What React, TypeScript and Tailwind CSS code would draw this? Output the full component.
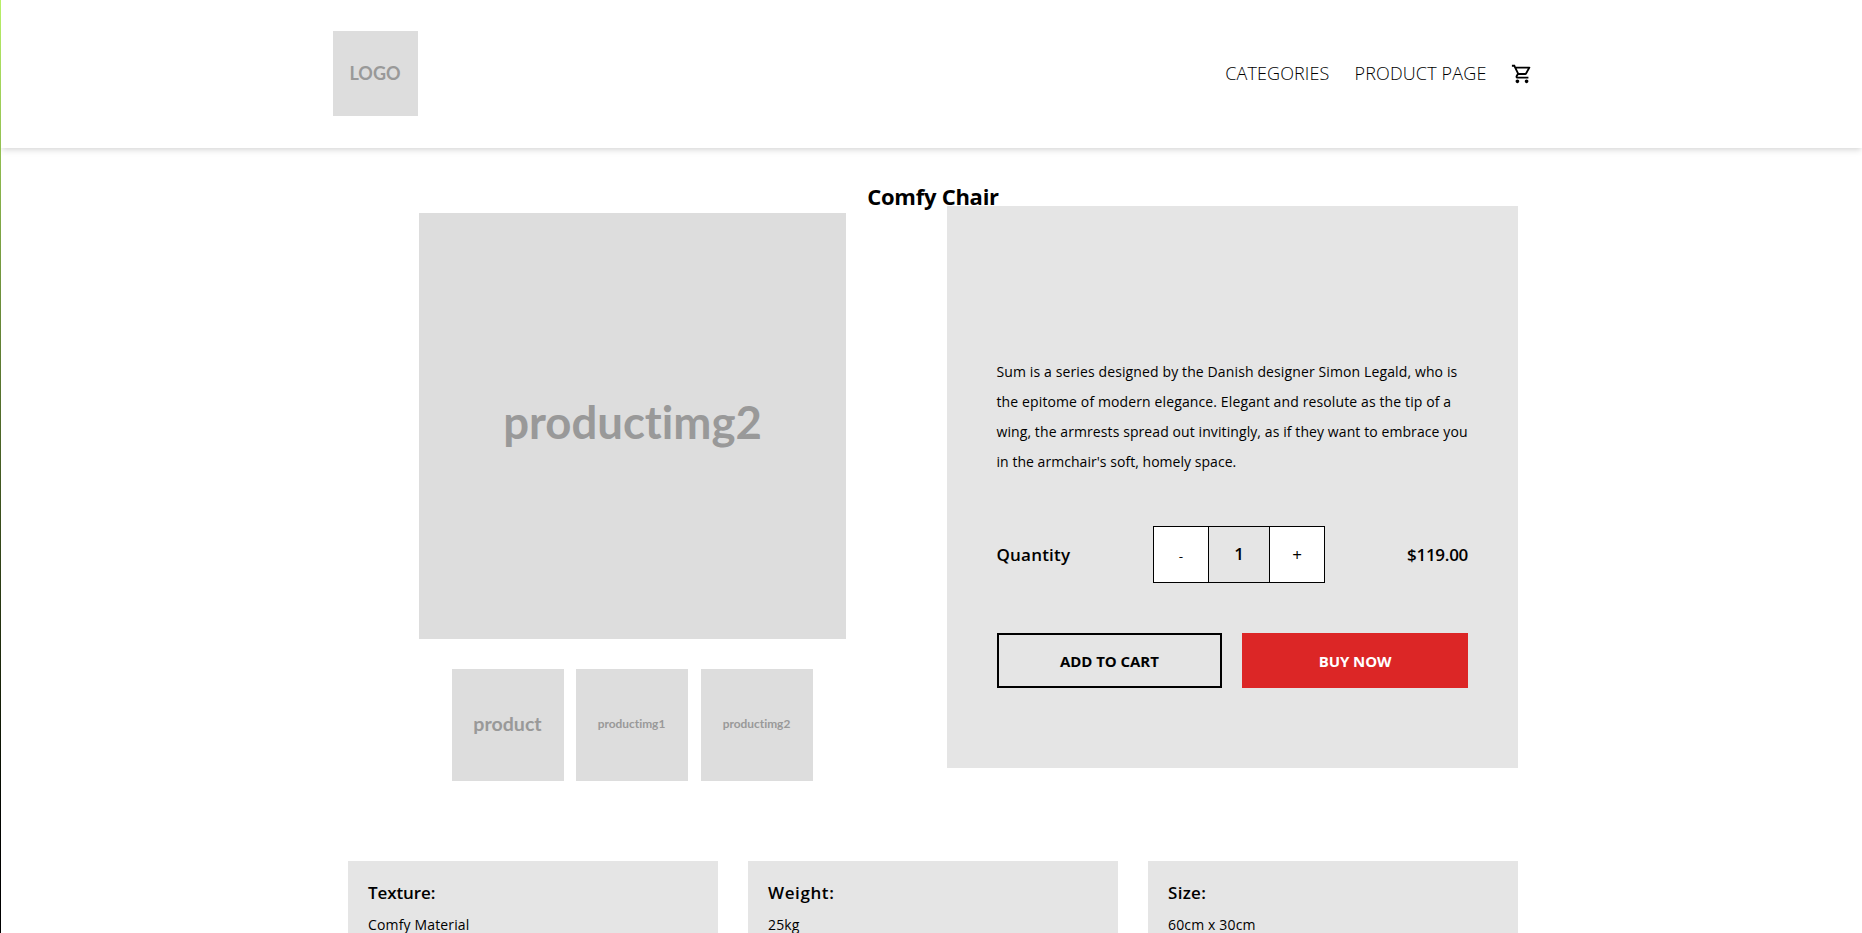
import { MdOutlineShoppingCart } from "react-icons/md";

const thumbs = [
  { label: "product", cls: "text-[19.6px] mr-3" },
  { label: "productimg1", cls: "text-[11.9px] mr-[13px]" },
  { label: "productimg2", cls: "text-[11.9px]" },
];

const description = [
  { text: "Sum is a series designed by the Danish designer Simon Legald, who is", cls: "tracking-[0.12px]" },
  { text: "the epitome of modern elegance. Elegant and resolute as the tip of a", cls: "tracking-[0.12px]" },
  { text: "wing, the armrests spread out invitingly, as if they want to embrace you", cls: "tracking-[0.09px]" },
  { text: "in the armchair's soft, homely space.", cls: "tracking-[0.04px]" },
];

const specs = [
  { title: "Texture:", value: "Comfy Material", cls: "tracking-[-0.1px]" },
  { title: "Weight:", value: "25kg", cls: "tracking-[0.6px]" },
  { title: "Size:", value: "60cm x 30cm", cls: "tracking-[0.3px]" },
];

function Header() {
  return (
    <header className="flex h-[148px] shrink-0 items-center justify-between bg-white pb-px pl-[332px] pr-[329px] shadow-[0_4px_6px_-1px_rgba(0,0,0,0.1),0_2px_4px_-1px_rgba(0,0,0,0.06)]">
      <div className="flex size-[85px] items-center justify-center bg-[#dddddd] pr-px font-['Lato',sans-serif] text-[18px] font-bold text-[#999999]">
        LOGO
      </div>
      <nav className="flex items-center text-[18px] font-light">
        <a className="mr-[25px] tracking-[0.1px]">CATEGORIES</a>
        <a className="mr-[24.5px] tracking-[0.15px]">PRODUCT PAGE</a>
        <MdOutlineShoppingCart className="size-[22px]" />
      </nav>
    </header>
  );
}

function Gallery() {
  return (
    <div className="ml-[71px] mt-[7px] flex w-[427px] flex-col items-center font-['Lato',sans-serif] font-bold text-[#999999] [font-variant-ligatures:none]">
      <div className="flex h-[426px] w-full items-center justify-center bg-[#dddddd] pb-[7px] text-[45.5px]">
        productimg2
      </div>
      <div className="mt-[30px] flex">
        {thumbs.map((t) => (
          <div key={t.label} className={`flex size-28 items-center justify-center bg-[#dddddd] pb-[2px] pr-px ${t.cls}`}>
            {t.label}
          </div>
        ))}
      </div>
    </div>
  );
}

function Purchase() {
  return (
    <div className="h-[562px] w-[571px] bg-[#e5e5e5] pl-[49.5px] pr-[50px] pt-[151px]">
      <div className="whitespace-nowrap text-[14px] leading-[30px]">
        {description.map((d) => (
          <p key={d.text} className={d.cls}>
            {d.text}
          </p>
        ))}
      </div>
      <div className="mt-[49px] flex h-[57px] items-center text-[17px] font-semibold">
        <span className="w-[156.5px] tracking-[0.2px]">Quantity</span>
        <div className="flex h-[57px] w-[172px] border border-black">
          <button className="w-[54px] bg-white pt-[3px] text-[13.5px] font-normal">-</button>
          <span className="flex grow items-center justify-center border-x border-black pb-[2px]">1</span>
          <button className="w-[54px] bg-white pt-[1px] text-[17px] font-normal">+</button>
        </div>
        <span className="ml-auto tracking-[-0.3px]">$119.00</span>
      </div>
      <div className="mt-[50px] grid h-[55px] grid-cols-2 gap-5 text-[15px] font-bold">
        <button className="border-2 border-black pt-[1px] tracking-[-0.05px]">ADD TO CART</button>
        <button className="bg-[#dc2626] pt-[1px] tracking-[-0.1px] text-white">BUY NOW</button>
      </div>
    </div>
  );
}

export default function App() {
  return (
    <div className="flex h-[933px] overflow-hidden bg-white font-['Open_Sans','Noto_Sans',sans-serif] text-black">
      <div className="w-px shrink-0 bg-linear-to-b from-[#b9f168] to-black" />
      <div className="flex grow flex-col overflow-hidden">
        <Header />
        <main className="flex flex-col pl-[347px] pr-[344px]">
          <h1 className="relative mt-[34px] h-6 text-center text-[22px] leading-[29px] font-bold tracking-[-0.25px]">
            Comfy Chair
          </h1>
          <section className="flex items-start justify-between">
            <Gallery />
            <Purchase />
          </section>
          <section className="mt-20 grid grid-cols-[370px_370px_370px] justify-between">
            {specs.map((s) => (
              <div key={s.title} className="h-28 bg-[#e5e5e5] px-5 pt-5">
                <h2 className={`text-[17px] leading-6 font-semibold ${s.cls}`}>{s.title}</h2>
                <p className="mt-2 text-[14px] leading-6 tracking-[0.15px]">{s.value}</p>
              </div>
            ))}
          </section>
        </main>
      </div>
    </div>
  );
}
